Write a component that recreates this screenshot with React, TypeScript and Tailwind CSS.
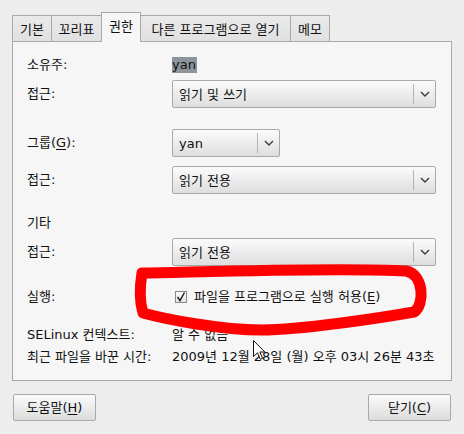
import React from "react";

const Chevron = () => (
  <svg width="10" height="6" viewBox="0 0 10 6" className="block">
    <path d="M1 1 L5 5 L9 1" fill="none" stroke="#3c3c3c" strokeWidth="1.4" />
  </svg>
);

function Combo({ text, w }: { text: string; w: string }) {
  return (
    <div
      className={`${w} h-[28px] flex items-center border border-[#a9a9a9] rounded-[2px] bg-gradient-to-b from-[#fbfbfb] to-[#dedede]`}
    >
      <div className="flex-1 pl-[6px] leading-none whitespace-nowrap">{text}</div>
      <div className="w-px h-[20px] bg-[#b4b4b4]" />
      <div className="w-[21px] flex justify-center">
        <Chevron />
      </div>
    </div>
  );
}

function Tab({ label, w, active, cls }: { label: string; w: string; active?: boolean; cls?: string }) {
  return (
    <div
      className={`${w} ${
        active
          ? "h-[30px] bg-[#f6f6f6] relative z-10 border-r pb-[2px]"
          : "h-[27px] bg-gradient-to-b from-[#eaeaea] to-[#e0e0e0]"
      } ${cls ?? ""} border-t border-[#a9a9a9] flex items-center justify-center whitespace-nowrap leading-none`}
    >
      {label}
    </div>
  );
}

export default function App() {
  return (
    <div className="relative w-[464px] h-[434px] bg-[#ededed] text-[13px] text-[#111] font-['DejaVu_Sans','Noto_Sans_CJK_KR',sans-serif] overflow-hidden">
      {/* tabs */}
      <div className="flex items-end h-[42px] pl-[12px]">
        <Tab label="기본" w="w-[39px]" cls="border-l" />
        <Tab label="꼬리표" w="w-[50px]" cls="border-l" />
        <Tab label="권한" w="w-[40px]" active cls="border-l" />
        <Tab label="다른 프로그램으로 열기" w="w-[149px]" />
        <Tab label="메모" w="w-[40px]" cls="border-l border-r" />
      </div>

      {/* panel */}
      <div className="relative -mt-px ml-[12px] w-[440px] h-[340px] border border-[#a9a9a9] bg-[#f6f6f6] pl-[14px] pr-[15px] flex flex-col">
        <div className="mt-[15px] h-[16px] flex items-center">
          <div className="w-[145px]">소유주:</div>
          <span className="bg-[#8e949b] h-[16px] leading-[16px] pr-[1px]">yan</span>
        </div>

        <div className="mt-[7px] h-[28px] flex items-center">
          <div className="w-[145px]">접근:</div>
          <Combo text="읽기 및 쓰기" w="w-[264px]" />
        </div>

        <div className="mt-[21px] h-[28px] flex items-center">
          <div className="w-[145px]">
            그룹(<span className="underline underline-offset-2">G</span>):
          </div>
          <Combo text="yan" w="w-[108px]" />
        </div>

        <div className="mt-[9px] h-[28px] flex items-center">
          <div className="w-[145px]">접근:</div>
          <Combo text="읽기 전용" w="w-[264px]" />
        </div>

        <div className="mt-[21px] h-[16px] flex items-center">기타</div>

        <div className="mt-[7px] h-[28px] flex items-center">
          <div className="w-[145px]">접근:</div>
          <Combo text="읽기 전용" w="w-[264px]" />
        </div>

        <div className="mt-[23px] h-[16px] flex items-center">
          <div className="w-[145px]">실행:</div>
          <div className="ml-[3px] w-[12px] h-[12px] border border-[#8a8a8a] bg-gradient-to-b from-[#fdfdfd] to-[#e4e4e4] flex items-center justify-center">
            <svg width="10" height="10" viewBox="0 0 10 10">
              <path d="M1.5 5 L4 8.5 L8.5 0.5" fill="none" stroke="#222" strokeWidth="1.5" />
            </svg>
          </div>
          <div className="ml-[7px] whitespace-nowrap">
            파일을 프로그램으로 실행 허용(<span className="underline underline-offset-2">E</span>)
          </div>
        </div>

        <div className="mt-[22px] h-[16px] flex items-center">
          <div className="w-[145px] whitespace-nowrap">SELinux 컨텍스트:</div>
          <div>알 수 없음</div>
        </div>

        <div className="mt-[6px] h-[16px] flex items-center">
          <div className="w-[145px] whitespace-nowrap">최근 파일을 바꾼 시간:</div>
          <div className="whitespace-nowrap">2009년 12월 28일 (월) 오후 03시 26분 43초</div>
        </div>
      </div>

      {/* buttons */}
      <div className="mt-[13px] px-[13px] flex justify-between">
        <button className="w-[83px] h-[27px] border border-[#a9a9a9] rounded-[2px] bg-gradient-to-b from-[#fbfbfb] to-[#dcdcdc] flex items-center justify-center leading-none">
          도움말(<span className="underline underline-offset-2">H</span>)
        </button>
        <button className="w-[83px] h-[27px] border border-[#a9a9a9] rounded-[2px] bg-gradient-to-b from-[#fbfbfb] to-[#dcdcdc] flex items-center justify-center leading-none">
          닫기(<span className="underline underline-offset-2">C</span>)
        </button>
      </div>

      {/* red annotation scribble */}
      <svg className="absolute left-0 top-0 pointer-events-none" width="464" height="434" viewBox="0 0 464 434">
        <path
          d="M142 273 C200 272 340 267 406 271 C424 274 425 305 414 312 C380 318 300 330 262 330 C220 330 165 319 143 313 C139 300 140 285 142 273 Z"
          fill="none"
          stroke="#ff0000"
          strokeWidth="11"
          strokeLinejoin="round"
        />
      </svg>

      {/* mouse cursor */}
      <svg className="absolute left-[253px] top-[340px] pointer-events-none" width="13" height="21" viewBox="0 0 13 21">
        <path d="M0.5 0.5 L0.5 16.5 L4.5 12.8 L7.3 19.3 L9.6 18.3 L6.9 12 L11.8 12 Z" fill="#fff" stroke="#111" strokeWidth="1" strokeLinejoin="round" />
      </svg>
    </div>
  );
}
